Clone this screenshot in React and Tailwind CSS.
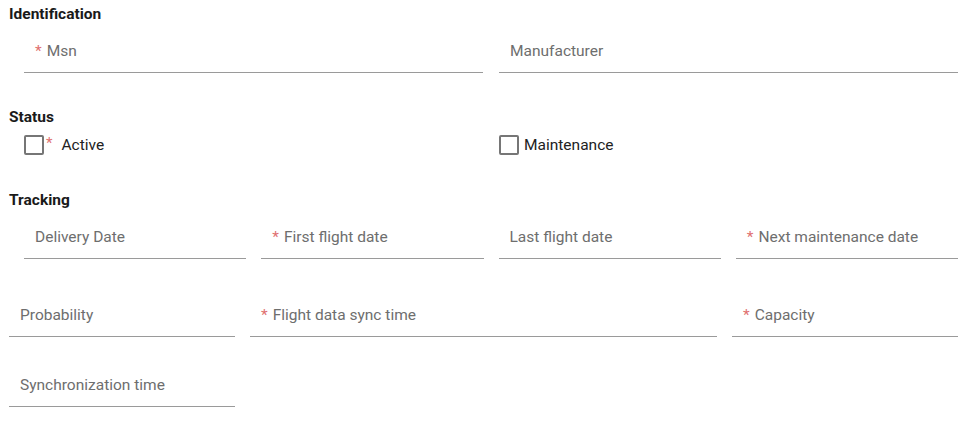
import React from 'react';

const Field = ({ label, required, className = '' }) => (
  <div className={`h-[49px] flex flex-col justify-end border-b border-[#9a9a9a] ${className}`}>
    <div className="pl-[11px] pb-[11px] text-[15.5px] leading-5 text-[#6e6e6e] whitespace-nowrap">
      {required && <span className="text-[#e07070] mr-[5px]">*</span>}
      {label}
    </div>
  </div>
);

const Check = ({ label, required }) => (
  <div className="flex items-center h-5">
    <span className="w-5 h-5 border-2 border-[#767676] rounded-[2px] bg-white" />
    {required && <span className="text-[#e07070] text-[15px] leading-5 -mt-1 ml-[2px] mr-[9px]">*</span>}
    <span className={`text-[15.5px] leading-5 text-[#222] ${required ? '' : 'ml-[5px]'}`}>{label}</span>
  </div>
);

const App = () => {
  return (
    <div className="min-h-screen bg-white pl-[9px] pr-[15px] pt-1 font-['Roboto','Liberation_Sans',sans-serif]">
      <h2 className="text-[15.5px] leading-5 font-bold text-[#1a1a1a]">Identification</h2>
      <div className="ml-[15px] grid grid-cols-2 gap-x-[16px]">
        <Field label="Msn" required />
        <Field label="Manufacturer" />
      </div>

      <h2 className="mt-[34px] text-[15.5px] leading-5 font-bold text-[#1a1a1a]">Status</h2>
      <div className="mt-2 ml-[15px] grid grid-cols-2 gap-x-[16px]">
        <Check label="Active" required />
        <Check label="Maintenance" />
      </div>

      <h2 className="mt-[35px] text-[15.5px] leading-5 font-bold text-[#1a1a1a]">Tracking</h2>
      <div className="ml-[15px] grid grid-cols-4 gap-x-[15px]">
        <Field label="Delivery Date" />
        <Field label="First flight date" required />
        <Field label="Last flight date" />
        <Field label="Next maintenance date" required />
      </div>

      <div className="mt-[29px] grid grid-cols-4 gap-x-[15px]">
        <Field label="Probability" />
        <Field label="Flight data sync time" required className="col-span-2" />
        <Field label="Capacity" required />
      </div>

      <div className="mt-[21px] grid grid-cols-4 gap-x-[15px]">
        <Field label="Synchronization time" />
      </div>
    </div>
  );
};

export default App;
